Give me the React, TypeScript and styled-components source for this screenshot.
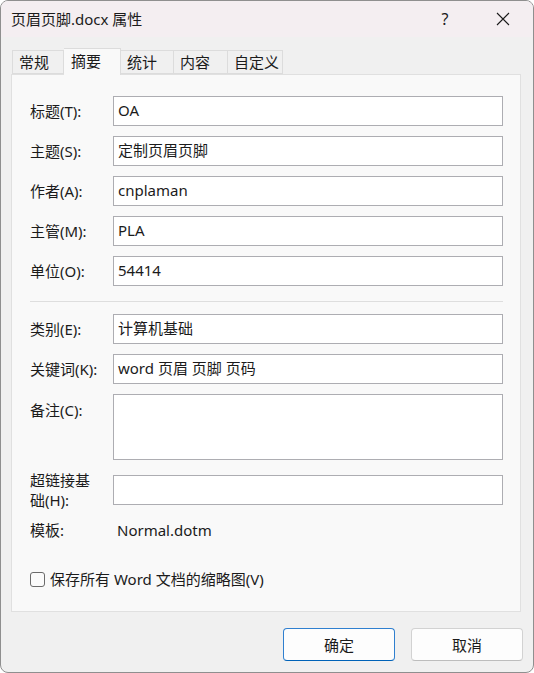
import * as React from 'react';
import styled, { createGlobalStyle } from 'styled-components';

const GlobalStyle = createGlobalStyle`
  html, body {
    margin: 0;
    padding: 0;
    background: #ffffff;
  }
  body {
    font-family: 'Noto Sans', 'Noto Sans CJK SC', sans-serif;
    font-size: 15px;
    color: #1b1b1b;
  }
`;

const Window = styled.div`
  box-sizing: border-box;
  width: 534px;
  height: 673px;
  display: flex;
  flex-direction: column;
  border: 1px solid #8f8f8f;
  border-radius: 8px;
  overflow: hidden;
  background: #f0f0f0;
`;

const TitleBar = styled.div`
  height: 36px;
  flex: none;
  display: flex;
  align-items: center;
  padding-left: 10px;
  background: #f4eef1;
`;

const Title = styled.div`
  flex: 1;
  line-height: 20px;
  padding-bottom: 1px;
`;

const TitleButton = styled.div<{ $w: number }>`
  width: ${p => p.$w}px;
  height: 36px;
  display: flex;
  align-items: center;
  justify-content: center;
  font-size: 16px;
  color: #1b1b1b;
`;

const Body = styled.div`
  flex: 1;
  display: flex;
  flex-direction: column;
  padding: 11px 12px 0 10px;
`;

const TabStrip = styled.div`
  display: flex;
  align-items: flex-end;
  height: 27px;
  padding-left: 1px;
  position: relative;
  z-index: 1;
  margin-bottom: -1px;
`;

const Tab = styled.div<{ $active?: boolean; $w: number }>`
  box-sizing: border-box;
  width: ${p => p.$w}px;
  height: ${p => (p.$active ? 27 : 24)}px;
  margin-bottom: ${p => (p.$active ? 0 : 1)}px;
  padding-left: ${p => (p.$active ? 7 : 6)}px;
  display: flex;
  align-items: center;
  line-height: 20px;
  padding-bottom: ${p => (p.$active ? 3 : 0)}px;
  background: ${p => (p.$active ? '#f9f9f9' : '#f0f0f0')};
  border: 1px solid #dcdcdc;
  border-bottom: ${p => (p.$active ? 'none' : '1px solid #dcdcdc')};
  & + & {
    border-left: none;
  }
`;

const Panel = styled.div`
  box-sizing: border-box;
  height: 538px;
  flex: none;
  background: #f9f9f9;
  border: 1px solid #e0e0e0;
  padding: 21px 17px 0 18px;
  display: flex;
  flex-direction: column;
`;

const FieldGroup = styled.div`
  display: flex;
  flex-direction: column;
  gap: 10px;
`;

const Row = styled.div<{ $top?: boolean }>`
  display: grid;
  grid-template-columns: 83px 1fr;
  align-items: ${p => (p.$top ? 'start' : 'center')};
`;

const Label = styled.div<{ $top?: boolean }>`
  max-width: 72px;
  line-height: 20px;
  padding-top: ${p => (p.$top ? 6 : 0)}px;
`;

const TextBox = styled.div<{ $h?: number }>`
  box-sizing: border-box;
  height: ${p => p.$h ?? 30}px;
  background: #ffffff;
  border: 1px solid #adadb2;
  padding: 0 4px;
  line-height: 27px;
  white-space: nowrap;
  overflow: hidden;
`;

const Value = styled.div`
  line-height: 20px;
  padding-left: 4px;
`;

const Divider = styled.div`
  height: 1px;
  background: #dedede;
  margin: 15px 0 12px;
`;

const CheckRow = styled.label`
  display: flex;
  align-items: center;
  gap: 5px;
  margin-top: 29px;
  line-height: 20px;
`;

const CheckBox = styled.span`
  box-sizing: border-box;
  width: 15px;
  height: 15px;
  border: 1px solid #6b6b6b;
  border-radius: 3px;
  background: #fbfbfb;
`;

const Footer = styled.div`
  display: flex;
  justify-content: flex-end;
  gap: 16px;
  padding-top: 16px;
  margin-right: -2px;
`;

const Button = styled.div<{ $primary?: boolean }>`
  box-sizing: border-box;
  width: 112px;
  height: 33px;
  display: flex;
  align-items: center;
  justify-content: center;
  border-radius: 4px;
  background: #fdfdfd;
  border: 1px solid ${p => (p.$primary ? '#2f7fcf' : '#d2d2d2')};
  border-bottom-color: ${p => (p.$primary ? '#0062b8' : '#bdbdbd')};
  line-height: 20px;
`;

const tabs = [
  { label: '常规', w: 52 },
  { label: '摘要', w: 57, active: true },
  { label: '统计', w: 53 },
  { label: '内容', w: 54 },
  { label: '自定义', w: 55 },
];

const topFields = [
  { label: '标题(T):', value: 'OA' },
  { label: '主题(S):', value: '定制页眉页脚' },
  { label: '作者(A):', value: 'cnplaman' },
  { label: '主管(M):', value: 'PLA' },
  { label: '单位(O):', value: '54414' },
];

export default function App() {
  return (
    <>
      <GlobalStyle />
      <Window>
        <TitleBar>
          <Title>页眉页脚.docx 属性</Title>
          <TitleButton $w={56}>?</TitleButton>
          <TitleButton $w={60}>
            <svg width="14" height="14" viewBox="0 0 14 14">
              <path d="M1 1 L13 13 M13 1 L1 13" stroke="#1b1b1b" strokeWidth="1.1" fill="none" />
            </svg>
          </TitleButton>
        </TitleBar>
        <Body>
          <TabStrip>
            {tabs.map(t => (
              <Tab key={t.label} $w={t.w} $active={t.active}>
                {t.label}
              </Tab>
            ))}
          </TabStrip>
          <Panel>
            <FieldGroup>
              {topFields.map(f => (
                <Row key={f.label}>
                  <Label>{f.label}</Label>
                  <TextBox>{f.value}</TextBox>
                </Row>
              ))}
            </FieldGroup>
            <Divider />
            <FieldGroup>
              <Row>
                <Label>类别(E):</Label>
                <TextBox>计算机基础</TextBox>
              </Row>
              <Row>
                <Label>关键词(K):</Label>
                <TextBox>word 页眉 页脚 页码</TextBox>
              </Row>
              <Row $top>
                <Label $top>备注(C):</Label>
                <TextBox $h={66} />
              </Row>
              <Row>
                <Label>超链接基础(H):</Label>
                <TextBox />
              </Row>
              <Row>
                <Label>模板:</Label>
                <Value>Normal.dotm</Value>
              </Row>
            </FieldGroup>
            <CheckRow>
              <CheckBox />
              保存所有 Word 文档的缩略图(V)
            </CheckRow>
          </Panel>
          <Footer>
            <Button $primary>确定</Button>
            <Button>取消</Button>
          </Footer>
        </Body>
      </Window>
    </>
  );
}
